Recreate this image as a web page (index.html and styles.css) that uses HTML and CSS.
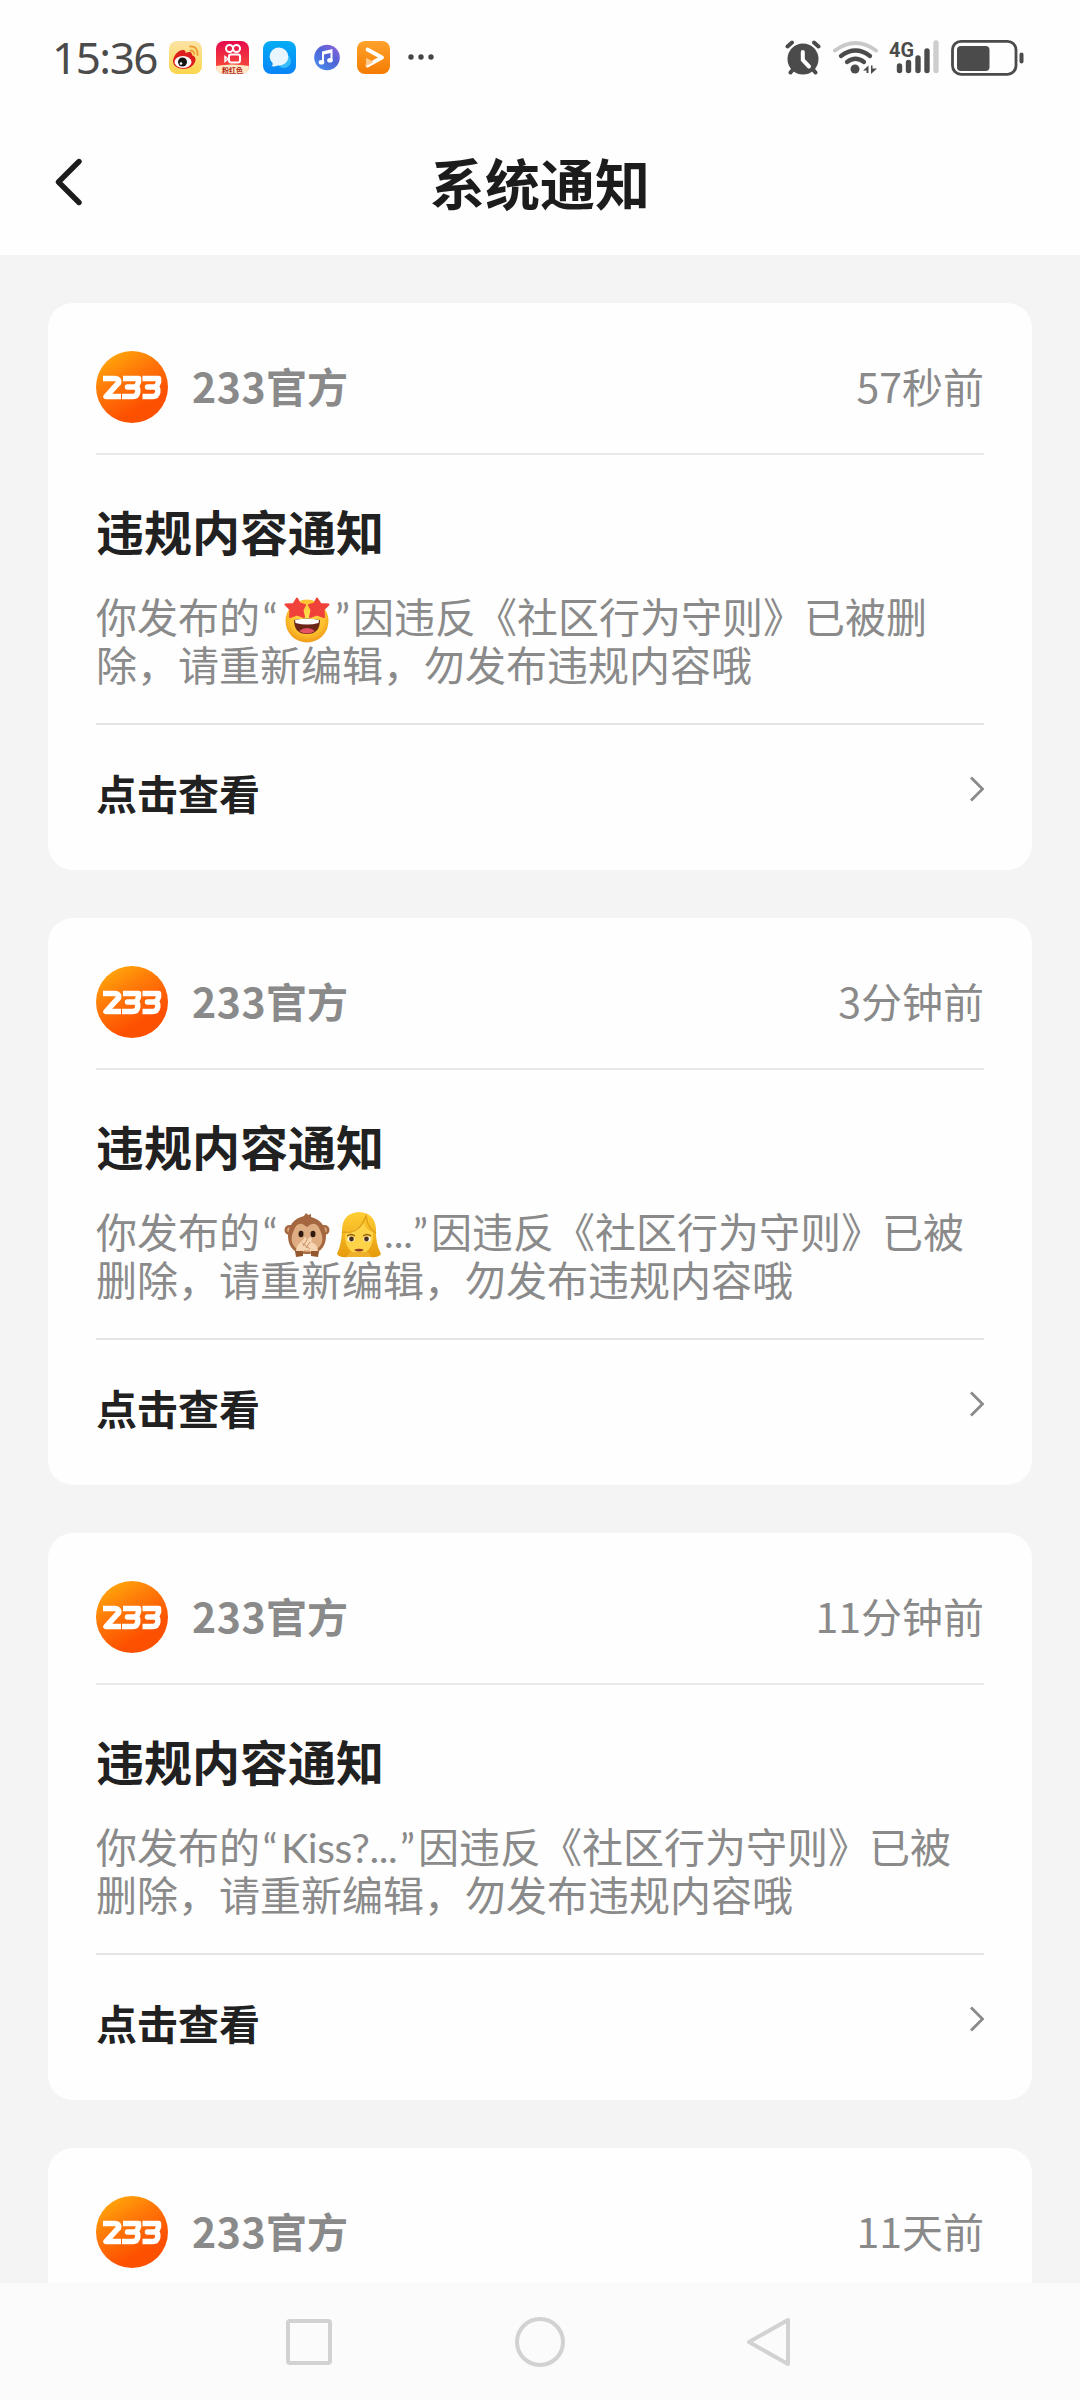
FILE: index.html
```html
<!DOCTYPE html>
<html lang="zh-CN">
<head>
<meta charset="utf-8">
<title>系统通知</title>
<link rel="stylesheet" href="styles.css">
</head>
<body>
<svg width="0" height="0" class="defs" aria-hidden="true">
  <defs>
    <linearGradient id="gAvatar" x1="0.15" y1="0.05" x2="0.6" y2="0.8"><stop offset="0" stop-color="#ffa80a"/><stop offset=".45" stop-color="#ff7a08"/><stop offset="1" stop-color="#fd5001"/></linearGradient>
    <linearGradient id="gWeibo" x1="0" y1="0" x2="0" y2="1"><stop offset="0" stop-color="#fbe3a6"/><stop offset="1" stop-color="#fcd64a"/></linearGradient>
    <linearGradient id="gKs" x1="0" y1="0" x2="0" y2="1"><stop offset="0" stop-color="#e6094c"/><stop offset="1" stop-color="#fb5a35"/></linearGradient>
    <linearGradient id="gMsg" x1="0" y1="0" x2="0" y2="1"><stop offset="0" stop-color="#03adf5"/><stop offset="1" stop-color="#0a84f6"/></linearGradient>
    <linearGradient id="gMusic" x1="1" y1="0" x2="0.2" y2="1"><stop offset="0" stop-color="#9a63dc"/><stop offset=".5" stop-color="#4f64d6"/><stop offset="1" stop-color="#4a8bea"/></linearGradient>
    <linearGradient id="gVideo" x1="0" y1="0" x2="0" y2="1"><stop offset="0" stop-color="#ffa22c"/><stop offset="1" stop-color="#f57c02"/></linearGradient>
    <radialGradient id="gFace" cx=".5" cy=".4" r=".6"><stop offset="0" stop-color="#ffe14f"/><stop offset=".7" stop-color="#fdbf2d"/><stop offset="1" stop-color="#ee9a18"/></radialGradient>
    <linearGradient id="gHair" x1="0" y1="0" x2="0" y2="1"><stop offset="0" stop-color="#ffcf35"/><stop offset="1" stop-color="#e69a0c"/></linearGradient>
    <symbol id="avatar" viewBox="0 0 72 72">
      <circle cx="36" cy="36" r="36" fill="url(#gAvatar)"/>
      <g fill="none" stroke="#fff" stroke-width="5.500" stroke-linejoin="round">
        <path d="M7 27.500H19Q24 28 22.500 32Q20.500 34 10 45.500H25"/>
        <path d="M27 27.500H42.500V31Q41 36 38 36H31.500H39Q42.500 37 41.800 41Q41 45.500 37 45.500H26"/>
        <path d="M46.500 27.500H62.500V31Q61 36 58 36H51.500H59Q62.500 37 61.800 41Q61 45.500 57 45.500H46.500"/>
      </g>
    </symbol>
    <symbol id="chevron" viewBox="0 0 14 26"><path d="M1 1.500 12.500 13 1 24.500" fill="none" stroke="#8a8a8a" stroke-width="2.800"/></symbol>
  </defs>
</svg>

<div class="screen">
  <header class="statusbar">
    <div class="status-left">
      <span class="clock">15:36</span>
      <svg class="app" viewBox="0 0 33 33"><rect width="33" height="33" rx="8" fill="url(#gWeibo)"/><path d="M4 21C4 15 9 9 14 9Q17 9 16.500 12Q23 9 23 14Q28 16 26 21Q23 28 14 28Q5 27 4 21Z" fill="#dc1d1d"/><ellipse cx="14" cy="21" rx="8.500" ry="6" fill="#fff"/><circle cx="13.500" cy="21" r="4.500" fill="#151515"/><circle cx="12" cy="22.500" r="1.300" fill="#fff"/><path d="M21 5.500Q29 5 28.500 14M21.500 9.500Q25.500 9.500 25 13" fill="none" stroke="#ef9c34" stroke-width="1.800" stroke-linecap="round"/></svg>
      <svg class="app" viewBox="0 0 33 33"><rect width="33" height="33" rx="8" fill="url(#gKs)"/><path d="M0 25Q16 22 33 25Q33 33 25 33H8Q0 33 0 25Z" fill="#ffe9c4"/><g fill="none" stroke="#fff" stroke-width="2"><circle cx="13.500" cy="7.500" r="3.500"/><circle cx="20.500" cy="7.500" r="3.500"/><rect x="13" y="13.500" width="11" height="8" rx="2"/><path d="M9 15.500V20.500L12 18Z" stroke-width="1.500"/></g><text x="16.500" y="31.500" text-anchor="middle" class="app-label">粉红色</text></svg>
      <svg class="app" viewBox="0 0 33 33"><rect width="33" height="33" rx="8" fill="url(#gMsg)"/><circle cx="21" cy="20" r="7" fill="#39bdf8"/><path d="M15.500 6.500a9.500 9 0 1 1-1 17.900Q12 26 8.500 25Q10.500 23.500 9.500 21.800A9.500 9 0 0 1 15.500 6.500Z" fill="#e9f6ff"/></svg>
      <svg class="app" viewBox="0 0 33 33"><circle cx="17" cy="16.500" r="12.800" fill="url(#gMusic)"/><g fill="#fff"><path d="M12 10.500 22.500 8V19H20.500V12L14 13.500V21.500H12Z"/><ellipse cx="11.500" cy="21.300" rx="2.800" ry="2.300"/><ellipse cx="20" cy="19.300" rx="2.800" ry="2.300"/></g></svg>
      <svg class="app" viewBox="0 0 33 33"><rect width="33" height="33" rx="8" fill="url(#gVideo)"/><path d="M10.500 8.500 25 16.500 10.500 24.500" fill="none" stroke="#fff" stroke-width="3.800" stroke-linecap="round" stroke-linejoin="round"/><path d="M10 18.500V23.500L14.500 21Z" fill="#ffc98a" stroke="#ffc98a" stroke-width="2"/></svg>
      <svg class="more" viewBox="0 0 26 6" fill="#454545"><circle cx="3" cy="3" r="2.700"/><circle cx="13" cy="3" r="2.700"/><circle cx="23" cy="3" r="2.700"/></svg>
    </div>
    <svg class="status-right" viewBox="0 0 240 38">
      <g fill="none" stroke="#4b4b4b" stroke-linecap="round">
        <circle cx="18" cy="21" r="15.500" fill="#4b4b4b" stroke="none"/>
        <path d="M2.500 8.500 7 4.500M33.500 8.500 29 4.500M8 31.500 5.500 34.500M28 31.500 30.500 34.500" stroke-width="4"/>
        <path d="M17.800 14V22L24 28.500" stroke="#fff" stroke-width="4"/>
        <path d="M50 12.500Q70.500-2.500 91 12.500" stroke="#c9c9c9" stroke-width="4"/>
        <path d="M56 18Q70.500 7 85 18M62 24Q70.500 17.500 79 24" stroke-width="4.300"/>
        <circle cx="70" cy="31" r="4.500" fill="#4b4b4b" stroke="none"/>
        <path d="M78 32.500 83.500 27.500V35H81.500V32.500ZM86 27.500H87.500V30.500H92L86 36Z" fill="#4b4b4b" stroke="none"/>
        <path d="M114.500 28V32.500M123.500 24.500V32.500M133 20V32.500M142 13V32.500" stroke-width="5.400"/>
        <path d="M151 5V32.500" stroke="#cdcdcd" stroke-width="5.400"/>
        <rect x="167.500" y="3.300" width="63.500" height="33" rx="8.500" stroke-width="2.800"/>
        <rect x="172" y="8" width="32.500" height="25" rx="4" fill="#4b4b4b" stroke="none"/>
        <path d="M236.500 16.500V23.500" stroke-width="4"/>
      </g>
      <text x="104" y="19" class="net" textLength="25" lengthAdjust="spacingAndGlyphs">4G</text>
    </svg>
  </header>

  <nav class="titlebar">
    <svg class="back" viewBox="0 0 28 48"><path d="M24 3.500 3.500 24 24 44.500" fill="none" stroke="#1c1c1c" stroke-width="5.400" stroke-linecap="round" stroke-linejoin="round"/></svg>
    <h1>系统通知</h1>
    <span></span>
  </nav>

  <main class="list">
    <article class="card">
      <div class="card-head"><svg class="avatar"><use href="#avatar"/></svg><b class="name"><span class="digits">233</span>官方</b><time>57秒前</time></div>
      <div class="card-body">
        <h2>违规内容通知</h2>
        <p>你发布的<span class="q open">“</span><svg class="emoji" viewBox="0 0 46 46"><circle cx="23" cy="24" r="21.500" fill="url(#gFace)"/><path d="M10 23Q23 20 36 23Q36 37 23 37Q10 37 10 23Z" fill="#6b2618"/><path d="M11 23Q23 20.500 35 23L34.500 26Q23 29 11.500 26Z" fill="#fff"/><path d="M15 34Q23 28 31 34Q23 39 15 34Z" fill="#e65364"/><path d="M13 1.500 15.500 6.500 21 8 18.500 13 20 20 13 17.500 6 20 6.500 12.500 1.500 7.500 9.500 7Z" fill="#f0413a" stroke="#f0413a" stroke-width="2" stroke-linejoin="round"/><path d="M33 1.500 30.500 6.500 25 8 27.500 13 26 20 33 17.500 40 20 39.500 12.500 44.500 7.500 36.500 7Z" fill="#f0413a" stroke="#f0413a" stroke-width="2" stroke-linejoin="round"/></svg><span class="q close">”</span>因违反《社区行为守则》已被删<br>除，请重新编辑，勿发布违规内容哦</p>
      </div>
      <a class="card-foot"><b>点击查看</b><svg class="chevron"><use href="#chevron"/></svg></a>
    </article>

    <article class="card">
      <div class="card-head"><svg class="avatar"><use href="#avatar"/></svg><b class="name"><span class="digits">233</span>官方</b><time>3分钟前</time></div>
      <div class="card-body">
        <h2>违规内容通知</h2>
        <p>你发布的<span class="q open">“</span><svg class="emoji" viewBox="0 0 46 46"><circle cx="5.500" cy="18" r="5" fill="#a4673f"/><circle cx="40.500" cy="18" r="5" fill="#a4673f"/><circle cx="6" cy="18" r="2.800" fill="#e2ac83"/><circle cx="40" cy="18" r="2.800" fill="#e2ac83"/><path d="M20 4 22 1 24 3 27 2 27 5Q42 9 42 25Q41 42 23 42Q5 42 4 25Q4 8 20 4Z" fill="#a4673f"/><path d="M23 15Q32 7 36 18Q42 30 33 37Q23 43 13 37Q4 30 10 18Q14 7 23 15Z" fill="#dfad82"/><ellipse cx="17" cy="22" rx="2.500" ry="3.200" fill="#301b13"/><ellipse cx="29" cy="22" rx="2.500" ry="3.200" fill="#301b13"/><path d="M12 40Q12 33 18 29L21 25Q23 25 22 29L26 25Q29 26 27 30L31 32Q34 35 34 40L28 42 25 38H20L18 42Z" fill="#f6d5b3"/><path d="M23 28 19 34M26 30 22 36M18 31 26 37" stroke="#c78f66" stroke-width="1"/><path d="M11 39 12 45 19 44 19 39ZM35 39 34 45 27 44 27 39Z" fill="#94582f"/></svg><svg class="emoji" viewBox="0 0 46 46"><path d="M23 0Q39 1 40 17Q39 30 45 42Q42 46 34 45H12Q4 46 1 42Q6 31 6 17Q7 1 23 0Z" fill="url(#gHair)"/><path d="M9 20Q18 20 27 10Q31 19 37 20Q38 35 29 41H17Q8 35 9 20Z" fill="#ffd348"/><path d="M14 40H32L36 45H10Z" fill="#eeb02a"/><path d="M6 20Q23 23 30 4Q32 17 40 21" fill="none" stroke="#e3a11a" stroke-width="1.500"/><ellipse cx="15" cy="27" rx="3.500" ry="2.600" fill="#fff"/><ellipse cx="31" cy="27" rx="3.500" ry="2.600" fill="#fff"/><circle cx="15.500" cy="27" r="2.400" fill="#4c301f"/><circle cx="30.500" cy="27" r="2.400" fill="#4c301f"/><path d="M11 24Q15 21 19 24M27 24Q31 21 35 24" fill="none" stroke="#8f6015" stroke-width="1.300"/><path d="M18 38Q23 35.500 28 38Q23 41 18 38Z" fill="#8d3a24"/></svg><span class="dots">...</span><span class="q close">”</span>因违反《社区行为守则》已被<br>删除，请重新编辑，勿发布违规内容哦</p>
      </div>
      <a class="card-foot"><b>点击查看</b><svg class="chevron"><use href="#chevron"/></svg></a>
    </article>

    <article class="card">
      <div class="card-head"><svg class="avatar"><use href="#avatar"/></svg><b class="name"><span class="digits">233</span>官方</b><time>11分钟前</time></div>
      <div class="card-body">
        <h2>违规内容通知</h2>
        <p>你发布的<span class="q open">“</span><span class="latin">Kiss?...</span><span class="q close">”</span>因违反《社区行为守则》已被<br>删除，请重新编辑，勿发布违规内容哦</p>
      </div>
      <a class="card-foot"><b>点击查看</b><svg class="chevron"><use href="#chevron"/></svg></a>
    </article>

    <article class="card">
      <div class="card-head"><svg class="avatar"><use href="#avatar"/></svg><b class="name"><span class="digits">233</span>官方</b><time>11天前</time></div>
    </article>
  </main>

  <footer class="navbar">
    <svg viewBox="0 0 50 50"><rect x="4" y="4" width="42" height="42" rx="2"/></svg>
    <svg viewBox="0 0 50 50"><circle cx="25" cy="25" r="23"/></svg>
    <svg viewBox="0 0 50 50"><path d="M42 3V47L3 25Z"/></svg>
  </footer>
</div>
</body>
</html>
```
FILE: styles.css
```css
* { box-sizing: border-box; }
body {
  margin: 0;
  background: #f4f4f4;
  font-family: "Noto Sans CJK SC", sans-serif;
  color: #212121;
}
.defs { position: absolute; }
.screen {
  width: 1080px;
  height: 2400px;
  display: flex;
  flex-direction: column;
  overflow: hidden;
}
.statusbar {
  height: 114px;
  flex: none;
  background: #fefefe;
  display: flex;
  justify-content: space-between;
  padding: 0 55px 0 52px;
  align-items: center;
}
.status-left { display: flex; align-items: center; }
.clock {
  width: 117px;
  font: 44px/60px "Noto Sans", sans-serif;
  letter-spacing: -1.5px;
  color: #4b4b4b;
  white-space: nowrap;
}
.app { width: 33px; height: 33px; margin-right: 14px; }
.app-label { font-size: 7px; font-weight: 700; fill: #b52a1c; }
.more { width: 26px; height: 6px; margin-left: 4px; }
.status-right { width: 240px; height: 38px; }
.net { font: 700 21px Roboto, sans-serif; fill: #4b4b4b; }

.titlebar {
  height: 141px;
  flex: none;
  background: #fefefe;
  display: grid;
  grid-template-columns: 100px 1fr 100px;
  align-items: center;
}
.back { width: 28px; height: 48px; margin: 0 0 5px 55px; }
h1 {
  margin: 0 0 8px;
  text-align: center;
  font-size: 55px;
  line-height: 80px;
  font-weight: 700;
  color: #1c1c1c;
}

.list {
  flex: 1;
  min-height: 0;
  overflow: hidden;
  padding: 48px 48px 0;
  display: flex;
  flex-direction: column;
  gap: 48px;
  background: #f4f4f4;
}
.card {
  flex: none;
  height: 567px;
  padding: 0 48px;
  border-radius: 25px;
  background: #fefefe;
}
.card-head {
  height: 152px;
  padding-top: 48px;
  display: flex;
  align-items: flex-start;
  border-bottom: 2px solid #e8e8e8;
}
.avatar { width: 72px; height: 72px; margin-right: 24px; flex: none; }
.name, time { font-size: 41px; line-height: 68px; color: #8a8a8a; }
.name { flex: 1; }
.digits { letter-spacing: 0.5px; }
.card-body { height: 270px; padding-top: 39px; border-bottom: 2px solid #e4e4e4; }
h2 { margin: 0; font-size: 48px; line-height: 72px; font-weight: 700; }
p {
  margin: 25px 0 0;
  font-size: 41px;
  line-height: 48px;
  color: #8a8a8a;
  white-space: nowrap;
}
.q, .dots, .latin { font-family: Lato, sans-serif; display: inline-block; line-height: 40px; }
.q { width: 20px; }
.open { text-align: center; }
.close { width: 21px; text-align: right; padding-right: 3px; }
.dots { width: 26px; }
.latin { width: 117px; padding-left: 1px; letter-spacing: -0.4px; }
.emoji { width: 46px; height: 46px; margin: -10px 2px -10px 4px; vertical-align: 0; }
.card-foot { display: flex; justify-content: space-between; padding-top: 34px; font-size: 41px; line-height: 66px; }
.chevron { width: 14px; height: 26px; margin-top: 17px; }

.navbar {
  flex: none;
  height: 117px;
  background: #fbfbfb;
  display: flex;
  justify-content: center;
  gap: 181px;
  padding-top: 34px;
}
.navbar svg { width: 50px; height: 50px; fill: none; stroke: #d2d2d2; stroke-width: 4; stroke-linejoin: round; }
```
